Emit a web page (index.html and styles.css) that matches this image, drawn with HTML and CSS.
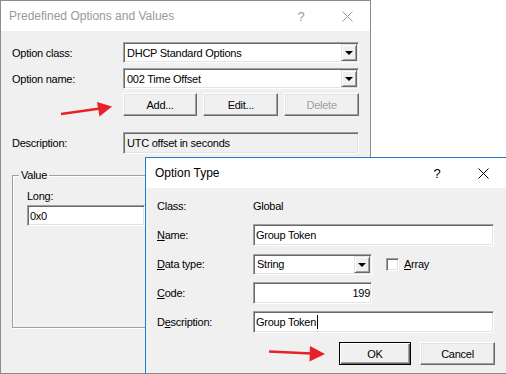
FILE: index.html
```html
<!DOCTYPE html>
<html lang="en">
<head>
    <meta charset="UTF-8">
    <meta name="viewport" content="width=device-width, initial-scale=1.0">
    <title>Predefined Options and Values</title>
    <link rel="stylesheet" href="styles.css">
</head>
<body>
    <!-- Predefined Options and Values (inactive) -->
    <div class="window win-back">
        <div class="titlebar inactive">
            <span class="title">Predefined Options and Values</span>
            <span class="cap-btn help">?</span>
            <span class="cap-btn close">
                <svg width="11" height="11" viewBox="0 0 11 11"><path d="M0.5 0.5 L10.5 10.5 M10.5 0.5 L0.5 10.5" stroke="currentColor" stroke-width="1" fill="none"/></svg>
            </span>
        </div>
        <div class="win-body">
            <div class="row">
                <span class="label">Option class:</span>
                <div class="combo sunken back-ctl">
                    <span class="combo-text">DHCP Standard Options</span>
                    <span class="drop"><i></i></span>
                </div>
            </div>
            <div class="row row-tight">
                <span class="label">Option name:</span>
                <div class="combo sunken back-ctl">
                    <span class="combo-text">002 Time Offset</span>
                    <span class="drop"><i></i></span>
                </div>
            </div>
            <div class="row row-buttons">
                <span class="label"></span>
                <button class="btn">Add...</button>
                <button class="btn">Edit...</button>
                <button class="btn" disabled>Delete</button>
            </div>
            <div class="row row-desc">
                <span class="label">Description:</span>
                <div class="field sunken readonly back-ctl">UTC offset in seconds</div>
            </div>

            <div class="group">
                <span class="group-title">Value</span>
                <div class="group-label">Long:</div>
                <div class="field sunken long-field">0x0</div>
            </div>
        </div>
    </div>

    <!-- Option Type (active) -->
    <div class="window win-front">
        <div class="titlebar">
            <span class="title">Option Type</span>
            <span class="cap-btn help">?</span>
            <span class="cap-btn close">
                <svg width="11" height="11" viewBox="0 0 11 11"><path d="M0.5 0.5 L10.5 10.5 M10.5 0.5 L0.5 10.5" stroke="currentColor" stroke-width="1" fill="none"/></svg>
            </span>
        </div>
        <div class="dlg-body">
            <div class="dlg-row">
                <span class="dlg-label">Class:</span>
                <span>Global</span>
            </div>
            <div class="dlg-row">
                <span class="dlg-label"><u>N</u>ame:</span>
                <div class="field sunken wide">Group Token</div>
            </div>
            <div class="dlg-row">
                <span class="dlg-label"><u>D</u>ata type:</span>
                <div class="combo sunken narrow">
                    <span class="combo-text">String</span>
                    <span class="drop"><i></i></span>
                </div>
                <span class="checkbox sunken"></span>
                <span class="check-label"><u>A</u>rray</span>
            </div>
            <div class="dlg-row">
                <span class="dlg-label"><u>C</u>ode:</span>
                <div class="field sunken narrow num">199</div>
            </div>
            <div class="dlg-row">
                <span class="dlg-label">D<u>e</u>scription:</span>
                <div class="field sunken wide">Group Token<span class="caret"></span></div>
            </div>
            <div class="dlg-buttons">
                <button class="btn btn-default">OK</button>
                <button class="btn btn-cancel">Cancel</button>
            </div>
        </div>
    </div>

    <!-- Red annotation arrows -->
    <svg class="arrows" width="506" height="374" viewBox="0 0 506 374">
        <line x1="61" y1="114" x2="100" y2="108.6" stroke="#e8202a" stroke-width="2.5"/>
        <polygon points="97,102 112,106.5 99.5,116.5" fill="#e8202a"/>
        <line x1="269" y1="351.5" x2="312" y2="353.6" stroke="#e8202a" stroke-width="2.5"/>
        <polygon points="310,346 325,354 309.5,361.5" fill="#e8202a"/>
    </svg>
</body>
</html>
```

FILE: styles.css
```css
/* Basic Styling */
body {
    margin: 0;
    width: 506px;
    height: 374px;
    overflow: hidden;
    position: relative;
    background-color: #fff;
    font-family: "Liberation Sans", Arial, sans-serif;
    font-size: 11px;
    letter-spacing: -0.25px;
    color: #000;
}

button {
    font-family: inherit;
    font-size: inherit;
    letter-spacing: inherit;
    color: #000;
    padding: 0;
}

/* Windows */
.window {
    position: absolute;
    box-sizing: border-box;
    background-color: #f0f0f0;
}

.win-back {
    left: 0;
    top: 0;
    width: 371px;
    height: 374px;
    border: 1px solid #8c8c8c;
}

.win-front {
    left: 145px;
    top: 157px;
    width: 362px;
    height: 217px;
    border: 1px solid #1c7dd0;
    border-bottom-color: #8c8c8c;
}

.titlebar {
    height: 30px;
    display: flex;
    align-items: center;
    background-color: #fff;
    font-size: 12px;
    letter-spacing: 0;
}

.titlebar .title {
    flex: 1;
    padding-left: 8px;
}

.win-front .titlebar .title { padding-left: 9px; }

.inactive { color: #999; }

.cap-btn {
    width: 46px;
    height: 30px;
    display: flex;
    align-items: center;
    justify-content: center;
}

.help { font-size: 13px; }

/* 3D borders */
.sunken {
    box-sizing: border-box;
    border: 1px solid;
    border-color: #a0a0a0 #fff #fff #a0a0a0;
    padding: 1px;
    box-shadow: inset 1px 1px 0 #696969, inset -1px -1px 0 #e3e3e3;
    background-color: #fff;
}

.btn {
    box-sizing: border-box;
    width: 75px;
    height: 23px;
    border: 1px solid;
    border-color: #fff #696969 #696969 #fff;
    box-shadow: inset -1px -1px 0 #a0a0a0, inset 1px 1px 0 #e3e3e3;
    background-color: #f0f0f0;
}

.btn:disabled { color: #a0a0a0; }

.btn-default {
    width: 72px;
    border: 1px solid #000;
    box-shadow: inset 1px 1px 0 #fff, inset -1px -1px 0 #696969, inset -2px -2px 0 #a0a0a0;
}

/* Background dialog layout */
.win-body {
    padding: 11px 11px 0 11px;
}

.row {
    display: flex;
    align-items: center;
}

.row-tight { margin-top: 5px; }
.row-buttons { margin-top: 4px; gap: 6px; }
.row-buttons .label { width: 105px; }
.row-desc { margin-top: 16px; }

.label { width: 111px; }

.back-ctl { width: 236px; }

.combo {
    height: 21px;
    display: flex;
    align-items: stretch;
}

.combo-text {
    flex: 1;
    padding-left: 2px;
    display: flex;
    align-items: center;
}

.drop {
    box-sizing: border-box;
    width: 16px;
    border: 1px solid;
    border-color: #e3e3e3 #696969 #696969 #e3e3e3;
    box-shadow: inset 1px 1px 0 #fff, inset -1px -1px 0 #a0a0a0;
    background-color: #f0f0f0;
    display: flex;
    align-items: center;
    justify-content: center;
}

.drop i {
    width: 0;
    height: 0;
    border-top: 4px solid #000;
    border-left: 4px solid transparent;
    border-right: 4px solid transparent;
    margin-top: 1px;
}

.field {
    height: 22px;
    display: flex;
    align-items: center;
    padding-left: 2px;
}

.readonly {
    background-color: #f0f0f0;
    padding-left: 3px;
}

/* Value group box */
.group {
    box-sizing: border-box;
    margin-top: 21px;
    width: 347px;
    height: 153px;
    border: 1px solid #a0a0a0;
    box-shadow: 1px 1px 0 #fff, inset 1px 1px 0 #fff;
    padding-left: 14px;
}

.group-title {
    display: table;
    margin: -7px 0 0 -8px;
    padding: 0 2px;
    line-height: 13px;
    background-color: #f0f0f0;
}

.group-label {
    margin-top: 8px;
    line-height: 13px;
}

.long-field {
    margin-top: 2px;
    width: 118px;
    height: 21px;
}

/* Option Type dialog layout */
.dlg-body {
    padding: 7px 11px 0 11px;
}

.dlg-row {
    height: 22px;
    display: flex;
    align-items: center;
    margin-bottom: 7px;
}

.dlg-label { width: 96px; }

.wide { width: 241px; }
.narrow { width: 119px; }

.num {
    justify-content: flex-end;
    padding-right: 1px;
}

.checkbox {
    width: 13px;
    height: 13px;
    margin-left: 14px;
}

.check-label { margin-left: 5px; }

.caret {
    display: inline-block;
    width: 1px;
    height: 14px;
    margin-left: 1px;
    background-color: #000;
}

.dlg-buttons {
    display: flex;
    justify-content: flex-end;
    gap: 9px;
    margin-top: 9px;
}

/* Annotation overlay */
.arrows {
    position: absolute;
    left: 0;
    top: 0;
    pointer-events: none;
}
```
